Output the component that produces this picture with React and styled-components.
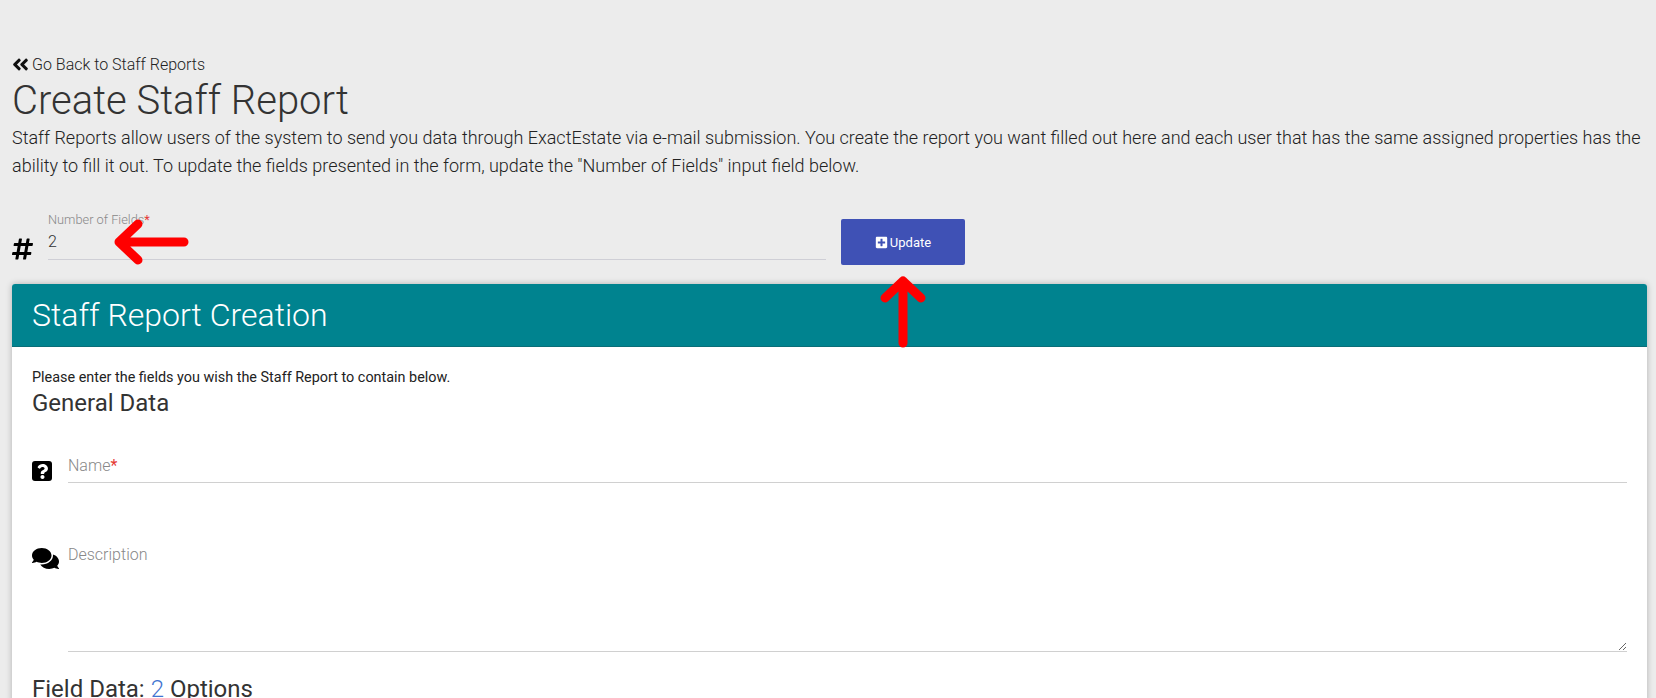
import React from "react";
import styled, { createGlobalStyle } from "styled-components";
import { FaAngleDoubleLeft, FaHashtag, FaComments, FaPlusSquare, FaQuestion } from "react-icons/fa";

const Global = createGlobalStyle`
  html, body { margin: 0; padding: 0; height: 698px; overflow: hidden; background: #ececec; }
  body { font-family: Roboto, "Liberation Sans", sans-serif; color: #333; }
  * { box-sizing: border-box; }
`;

const Page = styled.main`
  position: relative;
  padding: 54px 9px 0 12px;
`;
const BackLink = styled.a`
  display: flex;
  align-items: center;
  gap: 2px;
  height: 20px;
  font-size: 16px;
  font-weight: 300;
  color: #222;
  text-decoration: none;
  svg { width: 19px; height: 19px; margin-left: -1px; color: #111; }
`;
const Title = styled.h1`
  margin: 0;
  padding-top: 3px;
  font-size: 40px;
  line-height: 47px;
  font-weight: 300;
  color: #333;
`;
const Intro = styled.p`
  margin: 0;
  font-size: 18px;
  line-height: 28px;
  font-weight: 300;
  color: #222;
`;
const TopForm = styled.form`
  display: flex;
  align-items: flex-start;
  margin-top: 33px;
  height: 71px;
`;
const Hash = styled.span`
  display: flex;
  width: 36px;
  padding-top: 24px;
  svg { width: 21px; height: 24px; color: #000; }
`;
const FieldWrap = styled.div`
  position: relative;
  flex: ${p => p.$flex || "1"};
`;
const SmallLabel = styled.label`
  display: block;
  font-size: 12.8px;
  line-height: 14px;
  font-weight: 300;
  color: #888;
  b { color: #e53935; font-weight: 400; }
`;
const NumberInput = styled.input`
  display: block;
  width: 778px;
  height: 33px;
  padding: 0 0 3px;
  border: 0;
  border-bottom: 1px solid #cfcfd6;
  background: transparent;
  font: 300 16px Roboto, sans-serif;
  color: #333;
  outline: none;
`;
const UpdateButton = styled.button`
  display: flex;
  align-items: center;
  justify-content: center;
  gap: 2px;
  width: 124px;
  height: 46px;
  margin: 6px 0 0 15px;
  border: 0;
  border-radius: 2px;
  background: #3f51b5;
  color: #fff;
  font: 400 13px Roboto, sans-serif;
  svg { width: 13px; height: 13px; }
`;
const Card = styled.section`
  background: #fff;
  border-radius: 3px 3px 0 0;
  box-shadow: 0 0 6px rgba(0, 0, 0, 0.25);
`;
const CardHeader = styled.header`
  height: 63px;
  padding: 0 20px;
  display: flex;
  align-items: center;
  background: #00838f;
  border-radius: 3px 3px 0 0;
  border-bottom: 1px solid #0a6e78;
  color: #fff;
  font-size: 32px;
  font-weight: 300;
`;
const CardBody = styled.div`
  padding: 21px 20px 0;
`;
const Note = styled.p`
  margin: 0;
  font-size: 14.4px;
  line-height: 20px;
  color: #222;
`;
const SectionTitle = styled.h2`
  margin: ${p => p.$top || "0"} 0 0;
  font-size: 24px;
  line-height: 30px;
  font-weight: 400;
  color: #333;
  span { color: #3f74d0; font-weight: 300; }
`;
const Row = styled.div`
  display: flex;
  align-items: flex-start;
  margin-top: ${p => p.$top};
`;
const IconCell = styled.span`
  display: flex;
  width: 36px;
  flex: none;
  padding-top: ${p => p.$pad};
  svg { width: ${p => p.$size}; height: ${p => p.$size}; color: #000; }
`;
const QuestionBox = styled.span`
  display: flex;
  align-items: center;
  justify-content: center;
  width: 20px;
  height: 20px;
  border-radius: 3px;
  background: #000;
  svg { width: 13px; height: 15px; color: #fff; }
`;
const BigLabel = styled.label`
  position: absolute;
  left: 0;
  top: 4px;
  font-size: 16px;
  line-height: 20px;
  font-weight: 300;
  color: #888;
  b { color: #e53935; font-weight: 400; }
`;
const TextInput = styled.input`
  display: block;
  width: 100%;
  height: 31px;
  border: 0;
  border-bottom: 1px solid #d0d0d0;
  outline: none;
  background: transparent;
`;
const TextArea = styled.textarea`
  display: block;
  width: 100%;
  height: 111px;
  border: 0;
  border-bottom: 1px solid #d0d0d0;
  outline: none;
  background: transparent;
`;
const Arrow = styled.svg`
  position: absolute;
  left: 0;
  top: 0;
  pointer-events: none;
`;

export default function App() {
  return (
    <>
      <Global />
      <Page>
        <BackLink href="#"><FaAngleDoubleLeft />Go Back to Staff Reports</BackLink>
        <Title>Create Staff Report</Title>
        <Intro>
          Staff Reports allow users of the system to send you data through ExactEstate via e-mail submission. You create the report you want filled out here and each user that has the same assigned properties has the ability to fill it out. To update the fields presented in the form, update the "Number of Fields" input field below.
        </Intro>
        <TopForm>
          <Hash><FaHashtag /></Hash>
          <FieldWrap $flex="none">
            <SmallLabel>Number of Fields<b>*</b></SmallLabel>
            <NumberInput defaultValue="2" />
          </FieldWrap>
          <UpdateButton type="button"><FaPlusSquare />Update</UpdateButton>
        </TopForm>
        <Card>
          <CardHeader>Staff Report Creation</CardHeader>
          <CardBody>
            <Note>Please enter the fields you wish the Staff Report to contain below.</Note>
            <SectionTitle>General Data</SectionTitle>
            <Row $top="34px">
              <IconCell $pad="9px" $size="20px"><QuestionBox><FaQuestion /></QuestionBox></IconCell>
              <FieldWrap>
                <BigLabel>Name<b>*</b></BigLabel>
                <TextInput />
              </FieldWrap>
            </Row>
            <Row $top="58px">
              <IconCell $pad="4px" $size="27px"><FaComments /></IconCell>
              <FieldWrap>
                <BigLabel>Description</BigLabel>
                <TextArea />
              </FieldWrap>
            </Row>
            <SectionTitle $top="22px">Field Data: <span>2</span> Options</SectionTitle>
          </CardBody>
        </Card>
        <Arrow width="1656" height="698" viewBox="0 0 1656 698" fill="none" stroke="#ff0000" strokeWidth="9" strokeLinecap="round" strokeLinejoin="round">
          <path d="M184 242H119M138 224L119 242L138 260" />
          <path d="M903 343V281M885 298L903 281L921 298" />
        </Arrow>
      </Page>
    </>
  );
}
